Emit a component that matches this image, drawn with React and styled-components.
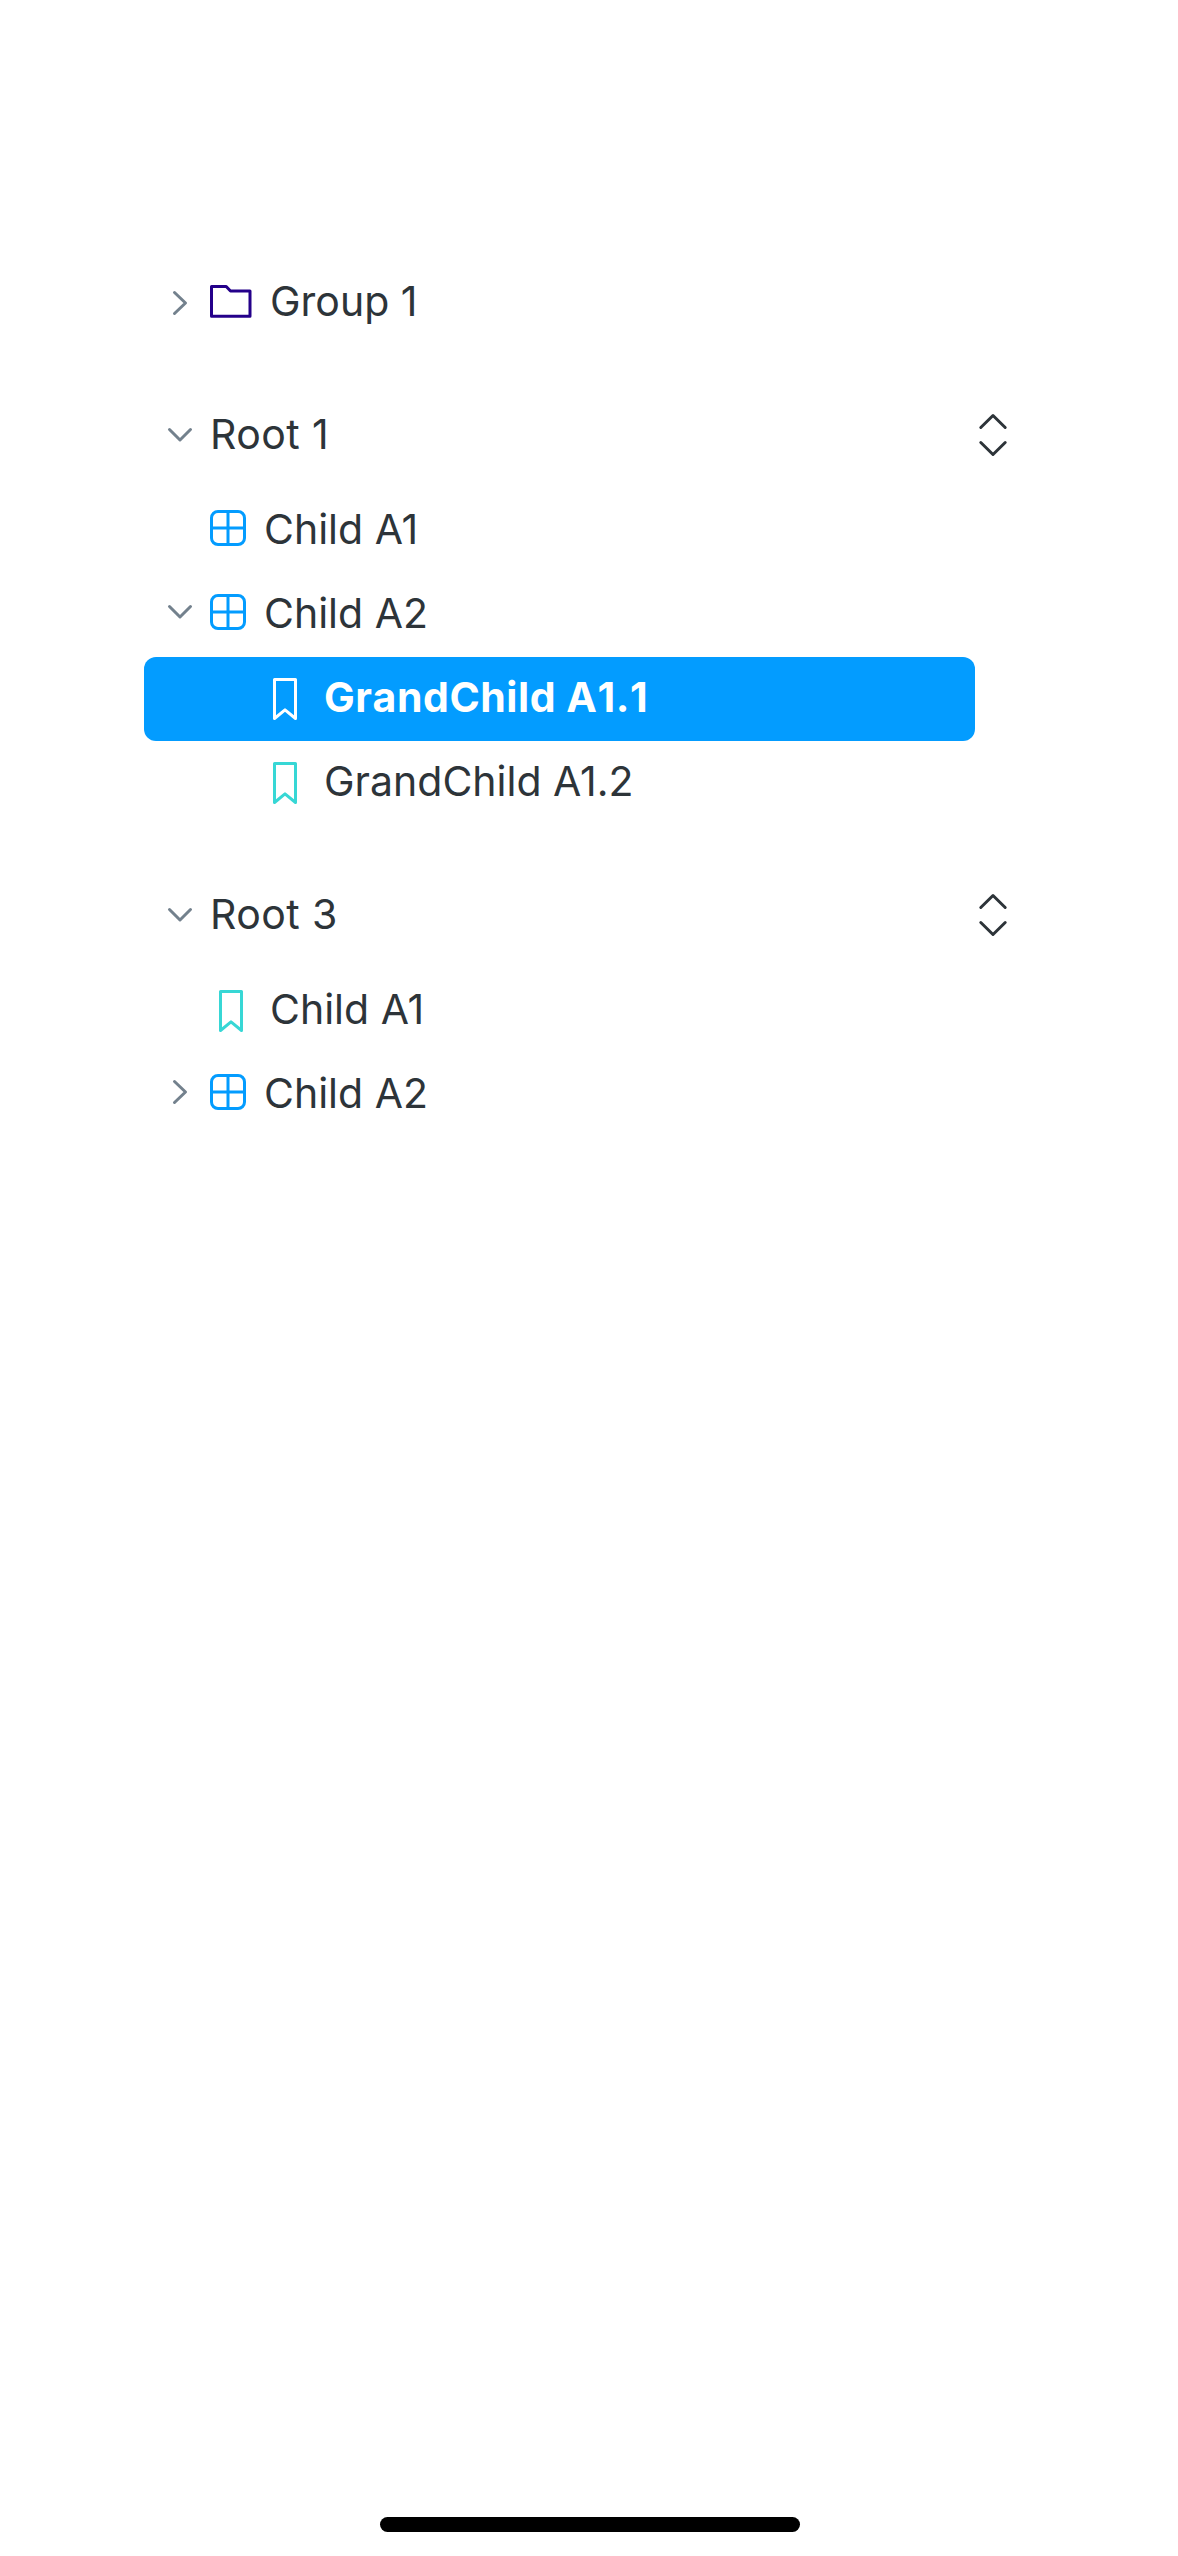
import React from "react";
import styled, { createGlobalStyle } from "styled-components";

const GlobalStyle = createGlobalStyle`
  body {
    margin: 0;
    background: #fff;
  }
`;

const Screen = styled.div`
  box-sizing: border-box;
  display: flex;
  flex-direction: column;
  justify-content: space-between;
  width: 1178px;
  height: 2556px;
  padding: 261px 0 24px 144px;
  background: #fff;
  color: #2d3439;
  font-family: Inter, "Liberation Sans", sans-serif;
`;

const Tree = styled.nav`
  display: flex;
  flex-direction: column;
  gap: 49px;
`;

const Section = styled.section`
  display: flex;
  flex-direction: column;
  gap: 11px;
`;

const Header = styled.header`
  display: flex;
  align-items: center;
`;

const Items = styled.div`
  display: flex;
  flex-direction: column;
`;

const Row = styled.div`
  box-sizing: border-box;
  display: flex;
  align-items: center;
  width: 831px;
  height: 84px;
  padding-left: 24px;
  border-radius: 12px;
  background: ${(p) => (p.$selected ? "#039cff" : "transparent")};
  color: ${(p) => (p.$selected ? "#fff" : "inherit")};
`;

const Toggle = styled.span`
  flex: none;
  display: flex;
  width: ${(p) => (p.$deep ? 96 : 42)}px;
  padding-bottom: ${(p) => p.$lift}px;
  color: #73818d;
`;

const IconSlot = styled.span`
  flex: none;
  box-sizing: border-box;
  display: flex;
  width: ${(p) => p.$width}px;
  padding-left: ${(p) => p.$inset || 0}px;
  padding-bottom: ${(p) => p.$lift || 0}px;
`;

const Label = styled.span`
  padding-bottom: 4px;
  font-size: 41px;
  line-height: 50px;
  font-weight: ${(p) => (p.$bold ? 700 : 400)};
  font-kerning: ${(p) => (p.$bold ? "none" : "normal")};
  letter-spacing: ${(p) => (p.$bold ? 0.55 : p.$heading ? 0.4 : 0)}px;
  white-space: pre;
`;

const SortButton = styled.span`
  display: flex;
  margin-left: 4px;
  padding-bottom: 2px;
`;

const HomeIndicator = styled.div`
  width: 420px;
  height: 15px;
  margin-left: 236px;
  border-radius: 8px;
  background: #000;
`;

const Drawing = styled.svg`
  display: block;
  flex: none;
  overflow: visible;
  fill: none;
  stroke: ${(p) => p.$color || "currentColor"};
  stroke-width: 3;
  stroke-linecap: round;
  stroke-linejoin: round;
`;

const ChevronDown = () => (
  <Drawing width="24" height="24" viewBox="0 0 24 24">
    <path d="M1.5 6.5 12 17 22.5 6.5" />
  </Drawing>
);

const ChevronRight = () => (
  <Drawing width="24" height="24" viewBox="0 0 24 24">
    <path d="M6.5 1.5 17.5 12 6.5 22.5" />
  </Drawing>
);

const Folder = () => (
  <Drawing width="42" height="36" viewBox="0 0 42 36" $color="#24008a">
    <path d="M1.5 1.5H16.2L20.5 6H40V31.2H1.5Z" />
  </Drawing>
);

const Grid = () => (
  <Drawing width="36" height="36" viewBox="0 0 36 36" $color="#039cff">
    <rect x="1.5" y="1.5" width="33" height="33" rx="6.5" />
    <path d="M18 1.5V34.5M1.5 18H34.5" />
  </Drawing>
);

const Bookmark = ({ color }) => (
  <Drawing width="24" height="42" viewBox="0 0 24 42" $color={color}>
    <path d="M1.5 1.5H22.5V40.5L12 31.8 1.5 40.5Z" />
  </Drawing>
);

const Sort = () => (
  <Drawing width="28" height="42" viewBox="0 0 28 42">
    <path d="M1.8 13.5 14 1.5 26.2 13.5M1.8 28.5 14 40.5 26.2 28.5" />
  </Drawing>
);

const TreeRow = ({ open, icon, label, selected, deep }) => (
  <Row $selected={selected}>
    <Toggle $deep={deep} $lift={icon === "grid" ? 6 : icon ? 0 : 2}>
      {open === true && <ChevronDown />}
      {open === false && <ChevronRight />}
    </Toggle>
    {icon === "folder" && (
      <IconSlot $width={60}>
        <Folder />
      </IconSlot>
    )}
    {icon === "grid" && (
      <IconSlot $width={54} $lift={6}>
        <Grid />
      </IconSlot>
    )}
    {icon === "bookmark" && (
      <IconSlot $width={60} $inset={9}>
        <Bookmark color={selected ? "#fff" : "#37d7d5"} />
      </IconSlot>
    )}
    <Label $bold={selected} $heading={!icon}>
      {label}
    </Label>
  </Row>
);

const SectionHeader = ({ label }) => (
  <Header>
    <TreeRow open label={label} />
    <SortButton>
      <Sort />
    </SortButton>
  </Header>
);

export default function App() {
  return (
    <>
      <GlobalStyle />
      <Screen>
        <Tree>
          <TreeRow open={false} icon="folder" label="Group 1" />
          <Section>
            <SectionHeader label="Root 1" />
            <Items>
              <TreeRow icon="grid" label="Child A1" />
              <TreeRow open icon="grid" label="Child A2" />
              <TreeRow deep selected icon="bookmark" label="GrandChild A1.1" />
              <TreeRow deep icon="bookmark" label="GrandChild A1.2" />
            </Items>
          </Section>
          <Section>
            <SectionHeader label="Root 3" />
            <Items>
              <TreeRow icon="bookmark" label="Child A1" />
              <TreeRow open={false} icon="grid" label="Child A2" />
            </Items>
          </Section>
        </Tree>
        <HomeIndicator />
      </Screen>
    </>
  );
}
